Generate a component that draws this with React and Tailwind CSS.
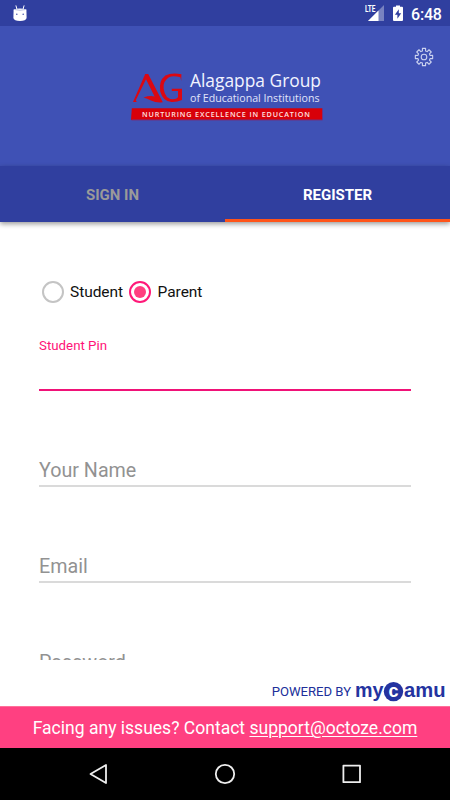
import React from "react";

function StatusBar() {
  return (
    <div className="flex h-[26px] shrink-0 items-center justify-between bg-[#303f9f] pl-[13px] pr-[9px]">
      <svg width="14" height="17" viewBox="0 0 14 17" className="mt-px">
        <path d="M3 0.8 4 4.5M11 0.8 10 4.5" stroke="#fff" strokeWidth="1" strokeLinecap="round" />
        <path d="M0.6 4.5Q7 2.6 13.4 4.5L13.6 13Q13 16 7 16T0.4 13Z" fill="#fff" />
        <path d="M2 4.6Q7 6 12 4.6" stroke="#b9bfe0" strokeWidth="1" fill="none" />
        <circle cx="3.8" cy="9.2" r="0.8" fill="#4b58ac" />
        <circle cx="10.2" cy="9.2" r="0.8" fill="#4b58ac" />
      </svg>
      <div className="flex items-center">
        <svg width="20" height="18" viewBox="0 0 20 18">
          <path d="M19 1V17H3Z" fill="#fff" fillOpacity="0.35" />
          <path d="M13.5 6.5V17H3Z" fill="#fff" />
          <text x="0" y="8" textLength="10.5" lengthAdjust="spacingAndGlyphs" fill="#fff" stroke="#303f9f" strokeWidth="0.8" paintOrder="stroke" className="font-[Roboto] text-[9px] font-bold">LTE</text>
        </svg>
        <svg width="10" height="17" viewBox="0 0 10 17" className="ml-[8px]">
          <path d="M3 1.8V0.5H7V1.8H9Q10 1.8 10 2.8V15Q10 16 9 16H1Q0 16 0 15V2.8Q0 1.8 1 1.8Z" fill="#fff" />
          <path d="M5.8 4.2 1.9 9.7H4.4V13.7L8.2 8.2H5.8Z" fill="#303f9f" />
        </svg>
        <span className="ml-[8px] mt-[3px] w-[30px] whitespace-nowrap text-[16px] font-medium leading-none tracking-[-0.2px] text-white">6:48</span>
      </div>
    </div>
  );
}

function GroupLogo() {
  return (
    <div className="flex w-[192px] flex-col">
      <div className="flex h-[36px]">
        <svg width="59" height="36" viewBox="0 0 59 36">
          <g fill="#db0812">
            <path d="M14.2 2H17.2L31.8 30.3Q25 31 20 28.4Q16 26.4 12.5 25.4Q19 23.2 23.6 24.4L15 7.2L4.8 28.3L5.8 30H2Z" />
            <path d="M50.2 9L49.4 5.2Q42 3.2 38 5.2Q31.8 9 32.6 16.5Q34 27.2 42 27.2Q45.7 27 47 25.2V19H40.8V16.8H51V28Q46 30.2 40.5 30Q32 29.4 29.2 19.5Q27.4 9 34.4 3.6Q41 0 50.4 2.3Z" />
          </g>
        </svg>
        <div className="flex flex-col">
          <svg width="133" height="22" viewBox="0 0 133 22" className="overflow-visible">
            <text x="0" y="15" textLength="131" lengthAdjust="spacingAndGlyphs" fill="#f2f4ff" className="font-['Open_Sans'] text-[18.2px]">Alagappa Group</text>
          </svg>
          <svg width="133" height="14" viewBox="0 0 133 14" className="overflow-visible">
            <text x="0" y="7.8" textLength="129.5" lengthAdjust="spacingAndGlyphs" fill="#e1e5fa" className="font-['Open_Sans'] text-[11.3px]">of Educational Institutions</text>
          </svg>
        </div>
      </div>
      <svg width="192" height="13" viewBox="0 0 192 13">
        <path d="M0 12L.8 0.3H191V12Z" fill="#d80009" />
        <path d="M0.5 12H191.5V0.3" stroke="#713080" strokeWidth="1" fill="none" />
        <text x="11" y="8.7" textLength="168" lengthAdjust="spacing" fill="#ffe3e0" className="font-['Open_Sans'] text-[7.2px] font-semibold">NURTURING EXCELLENCE IN EDUCATION</text>
      </svg>
    </div>
  );
}

const gearPath = Array.from({ length: 8 }, (_, i) => {
  const base = (i * Math.PI) / 4;
  return [[-0.25, 6.3], [-0.18, 8.8], [0.18, 8.8], [0.25, 6.3]]
    .map(([a, r]) => `${(10 + r * Math.sin(base + a)).toFixed(2)} ${(10 - r * Math.cos(base + a)).toFixed(2)}`)
    .join("L");
}).join("L");

function Header() {
  return (
    <header className="flex h-[140px] shrink-0 items-start justify-between bg-[#3f51b5]">
      <div className="ml-[131px] mt-[46px]"><GroupLogo /></div>
      <svg width="20" height="20" viewBox="0 0 20 20" className="mr-[16px] mt-[21px]" fill="none" stroke="#cbd2ef" strokeWidth="1.1" strokeLinejoin="round">
        <path d={`M${gearPath}Z`} />
        <circle cx="10" cy="10" r="2.8" />
      </svg>
    </header>
  );
}

function Tabs() {
  return (
    <div className="z-10 flex h-[56px] shrink-0 bg-[#303f9f] text-[15px] font-bold shadow-[0_2px_5px_rgba(0,0,0,0.4)]">
      <button className="flex flex-1 items-center justify-center pt-[2px] text-[#9a9a9a]">SIGN IN</button>
      <button className="flex flex-1 items-center justify-center border-b-[3px] border-[#ff5419] pt-[5px] text-white">REGISTER</button>
    </div>
  );
}

function Radio({ label, checked }) {
  return (
    <label className="flex items-center gap-[6.5px] text-[15.5px] text-[#111]">
      <span className={checked ? "flex size-[22px] items-center justify-center rounded-full border-2 border-[#ff1878]" : "flex size-[22px] items-center justify-center rounded-full border-2 border-[#c4c4c4]"}>
        {checked && <span className="size-[12px] rounded-full bg-[#ff3f80]" />}
      </span>
      <span className="mt-px whitespace-nowrap tracking-[-0.05px]">{label}</span>
    </label>
  );
}

function Field({ label }) {
  return (
    <div className="flex h-[96px] shrink-0 items-end border-b-2 border-[#dadada] pb-[2px] text-[19.7px] leading-[24px] text-[#929292]">
      {label}
    </div>
  );
}

export default function App() {
  return (
    <div className="flex h-[800px] w-[450px] flex-col overflow-hidden bg-white font-[Roboto,sans-serif]">
      <StatusBar />
      <Header />
      <Tabs />
      <main className="flex h-[438px] shrink-0 flex-col overflow-hidden px-[39px]">
        <div className="ml-[2.5px] mt-[59px] flex h-[22px] shrink-0 gap-[6px]">
          <Radio label="Student" />
          <Radio label="Parent" checked />
        </div>
        <div className="mt-[34px] h-[54px] shrink-0 border-b-2 border-[#f01278] text-[13.3px] leading-[18px] text-[#ff1278]">Student Pin</div>
        <Field label="Your Name" />
        <Field label="Email" />
        <Field label="Password" />
      </main>
      <div className="flex h-[46px] shrink-0 items-center justify-end pr-[4px] pt-[16px] text-[#202f9a]">
        <span className="mt-[2px] whitespace-nowrap text-[13.1px]">POWERED BY</span>
        <svg width="91" height="24" viewBox="0 0 91 24" className="ml-[4px]" fill="#2433a0">
          <text x="0" y="17.5" textLength="28.5" lengthAdjust="spacingAndGlyphs" className="font-['Liberation_Sans'] text-[20px] font-bold">my</text>
          <circle cx="38.5" cy="12.6" r="9.7" />
          <text x="33.5" y="17.5" fill="#fff" className="font-['Liberation_Sans'] text-[18px] font-bold">c</text>
          <text x="49" y="17.5" textLength="41.5" lengthAdjust="spacingAndGlyphs" className="font-['Liberation_Sans'] text-[20px] font-bold">amu</text>
        </svg>
      </div>
      <div className="flex h-[42px] shrink-0 items-center justify-center border-t border-[#ff7099] bg-[#ff4081] pt-[2px] text-[17.55px] text-white">
        <p className="whitespace-nowrap">Facing any issues? Contact <a className="underline decoration-1 underline-offset-2">support@octoze.com</a></p>
      </div>
      <nav className="flex h-[52px] shrink-0 items-center justify-between bg-black pl-[88px] pr-[88px]">
        <svg width="22" height="22" viewBox="0 0 22 22" fill="none" stroke="#eee" strokeWidth="1.8" strokeLinejoin="round"><path d="M18 2V20L2.5 11Z" /></svg>
        <svg width="22" height="22" viewBox="0 0 22 22" fill="none" stroke="#eee" strokeWidth="1.8"><circle cx="11" cy="11" r="9.2" /></svg>
        <svg width="22" height="20" viewBox="0 0 22 20" fill="none" stroke="#eee" strokeWidth="1.8" strokeLinejoin="round"><path d="M3.4 1.6H20V18.2H3.4Z" /></svg>
      </nav>
    </div>
  );
}
